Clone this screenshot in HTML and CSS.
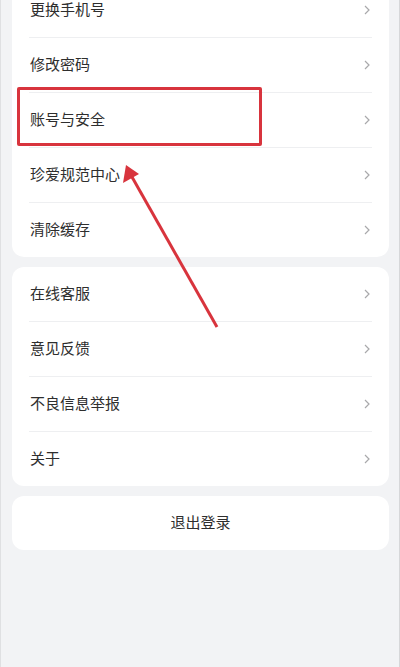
FILE: index.html
```html
<!DOCTYPE html>
<html lang="zh-CN">
<head>
    <meta charset="UTF-8">
    <title>设置</title>
    <link rel="stylesheet" href="styles.css">
</head>
<body>
    <div class="page">
        <div class="card card-first">
            <div class="row"><span>更换手机号</span><svg class="chev" viewBox="0 0 6 10"><polyline points="1,1 5,5 1,9"/></svg></div>
            <div class="row"><span>修改密码</span><svg class="chev" viewBox="0 0 6 10"><polyline points="1,1 5,5 1,9"/></svg></div>
            <div class="row"><span>账号与安全</span><svg class="chev" viewBox="0 0 6 10"><polyline points="1,1 5,5 1,9"/></svg></div>
            <div class="row"><span>珍爱规范中心</span><svg class="chev" viewBox="0 0 6 10"><polyline points="1,1 5,5 1,9"/></svg></div>
            <div class="row"><span>清除缓存</span><svg class="chev" viewBox="0 0 6 10"><polyline points="1,1 5,5 1,9"/></svg></div>
        </div>
        <div class="card">
            <div class="row"><span>在线客服</span><svg class="chev" viewBox="0 0 6 10"><polyline points="1,1 5,5 1,9"/></svg></div>
            <div class="row"><span>意见反馈</span><svg class="chev" viewBox="0 0 6 10"><polyline points="1,1 5,5 1,9"/></svg></div>
            <div class="row"><span>不良信息举报</span><svg class="chev" viewBox="0 0 6 10"><polyline points="1,1 5,5 1,9"/></svg></div>
            <div class="row"><span>关于</span><svg class="chev" viewBox="0 0 6 10"><polyline points="1,1 5,5 1,9"/></svg></div>
        </div>
        <div class="card logout"><span>退出登录</span></div>

        <!-- annotation over the list -->
        <div class="mark"></div>
        <svg class="arrow" viewBox="0 0 400 667">
            <line x1="216" y1="327" x2="131" y2="177"/>
            <polygon points="125,165 122,183 138,174"/>
        </svg>
    </div>
</body>
</html>
```

FILE: styles.css
```css
html, body {
    margin: 0;
    padding: 0;
}
body {
    background: #f2f3f5;
    font-family: "Noto Sans CJK SC", "Noto Sans", sans-serif;
    color: #2e2e2e;
}
.page {
    position: relative;
    height: 667px;
    overflow: hidden;
    padding: 0 10px 0 11px;
    border-left: 1px solid #dfe0e2;
    border-right: 1px solid #d6d7d9;
    display: flex;
    flex-direction: column;
    gap: 10px;
}
.card {
    background: #fff;
    border-radius: 12px;
}
.card-first {
    margin-top: -17px;
}
.row {
    height: 54px;
    margin: 0 17px;
    padding: 0 1px;
    display: flex;
    align-items: center;
    justify-content: space-between;
    font-size: 15px;
    border-bottom: 1px solid #eeeff1;
}
.row span, .logout span {
    padding-bottom: 3px;
}
.row:last-child {
    border-bottom: none;
}
.chev {
    width: 6px;
    height: 10px;
    margin-right: 1px;
}
.chev polyline {
    fill: none;
    stroke: #a9a9ab;
    stroke-width: 1.2;
}
.logout {
    height: 54px;
    display: flex;
    align-items: center;
    justify-content: center;
    font-size: 15px;
}
.mark {
    position: absolute;
    left: 16px;
    top: 87px;
    width: 239px;
    height: 53px;
    border: 3px solid #d8343d;
    border-radius: 2px;
}
.arrow {
    position: absolute;
    left: 0;
    top: 0;
    width: 400px;
    height: 667px;
}
.arrow line {
    stroke: #d8343d;
    stroke-width: 3;
}
.arrow polygon {
    fill: #d8343d;
}
```
